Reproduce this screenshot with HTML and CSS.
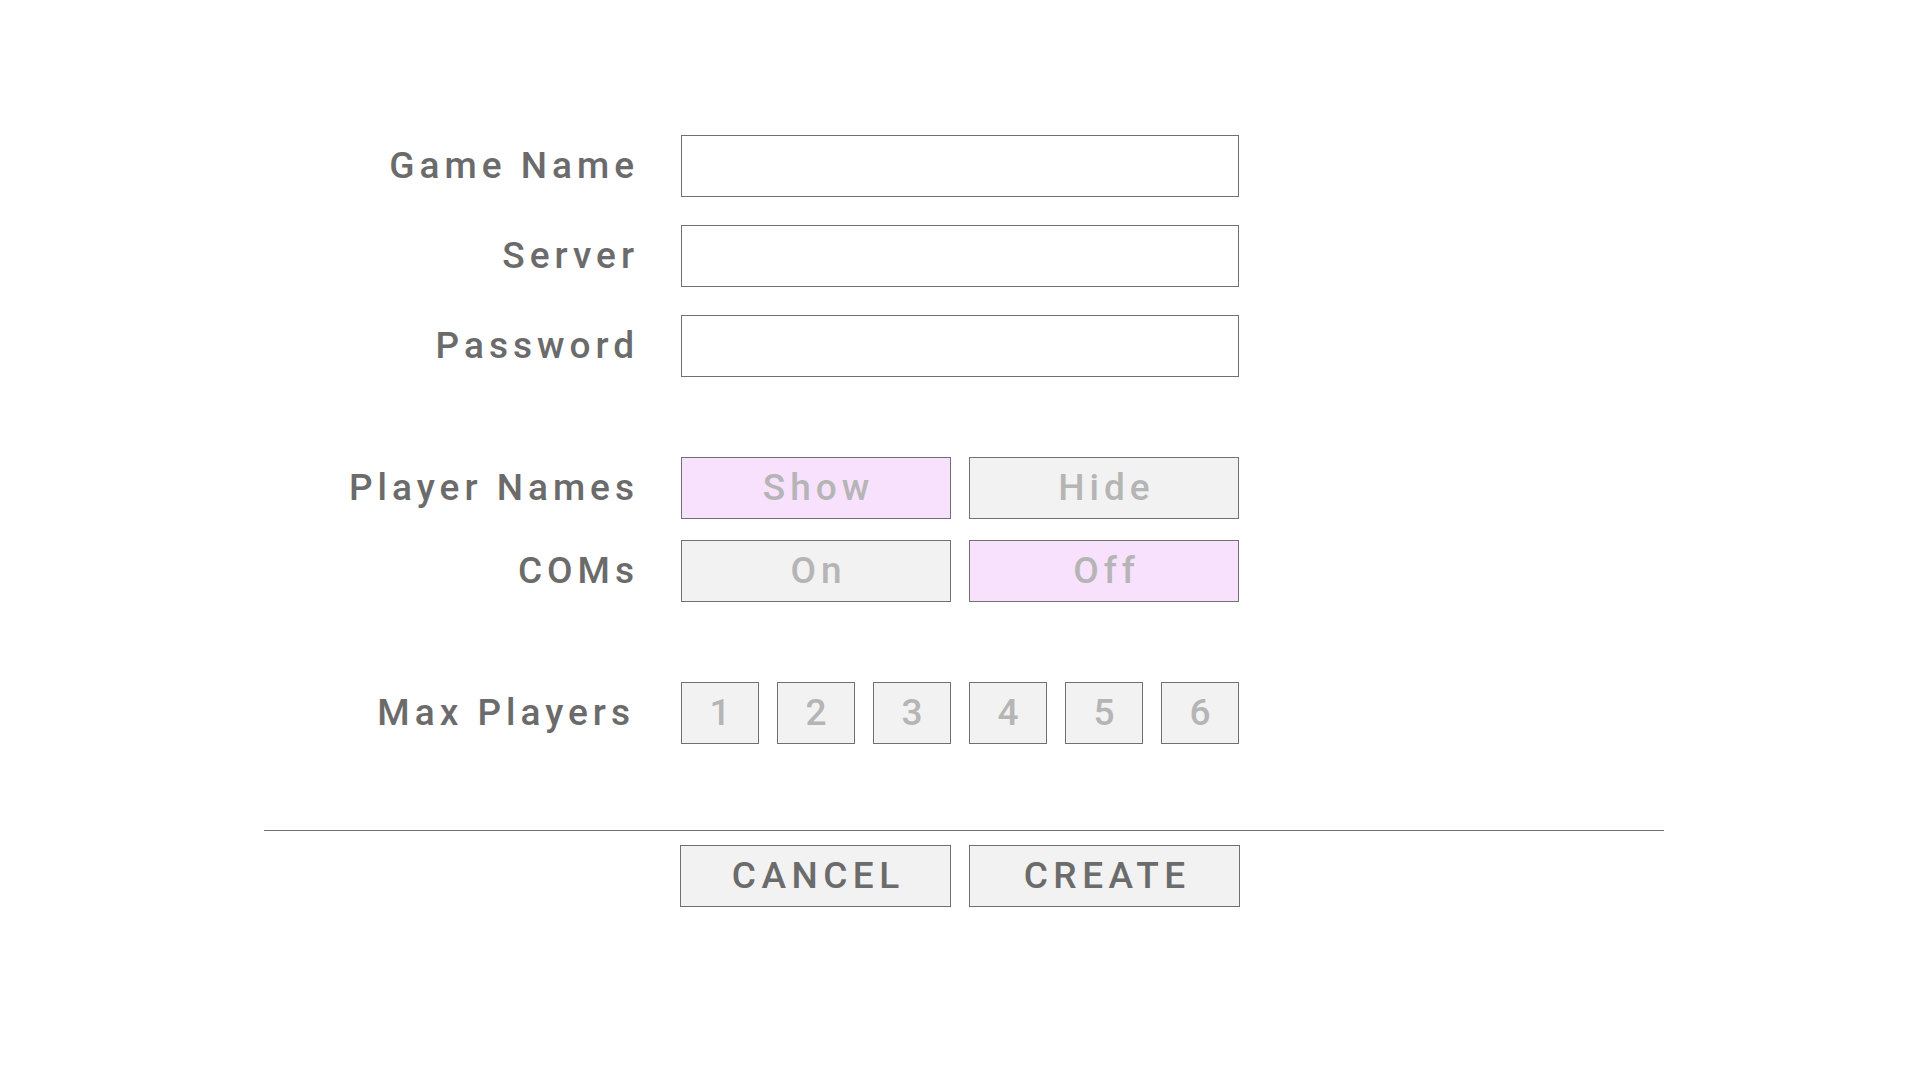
FILE: index.html
```html
<!DOCTYPE html>
<html>
<head>
<meta charset="utf-8">
<link rel="stylesheet" href="styles.css">
</head>
<body>
<main class="page">
  <section class="group group-text">
    <div class="row">
      <label class="label">Game Name</label>
      <div class="field"></div>
    </div>
    <div class="row">
      <label class="label">Server</label>
      <div class="field"></div>
    </div>
    <div class="row">
      <label class="label">Password</label>
      <div class="field"></div>
    </div>
  </section>

  <section class="group group-toggle">
    <div class="row">
      <label class="label">Player Names</label>
      <div class="pair">
        <div class="opt selected">Show</div>
        <div class="opt">Hide</div>
      </div>
    </div>
    <div class="row">
      <label class="label">COMs</label>
      <div class="pair">
        <div class="opt">On</div>
        <div class="opt selected">Off</div>
      </div>
    </div>
  </section>

  <section class="group group-max">
    <div class="row">
      <label class="label label-max">Max Players</label>
      <div class="nums">
        <div class="num">1</div>
        <div class="num">2</div>
        <div class="num">3</div>
        <div class="num">4</div>
        <div class="num">5</div>
        <div class="num">6</div>
      </div>
    </div>
  </section>

  <hr class="divider">

  <div class="actions">
    <div class="action">CANCEL</div>
    <div class="action">CREATE</div>
  </div>
</main>
</body>
</html>
```

FILE: styles.css
```css
* { box-sizing: border-box; }
html, body {
  margin: 0;
  padding: 0;
  background: #ffffff;
}
body {
  font-family: Roboto, "DejaVu Sans Condensed", sans-serif;
  font-weight: 500;
  color: #6b6b6b;
  width: 1920px;
  height: 1080px;
  overflow: hidden;
}
.page {
  padding-top: 135px;
  display: flex;
  flex-direction: column;
}
.group {
  display: flex;
  flex-direction: column;
}
.group-text { gap: 28px; }
.group-toggle { gap: 21px; margin-top: 80px; }
.group-max { margin-top: 80px; }
.row {
  display: grid;
  grid-template-columns: 634px 558px;
  column-gap: 47px;
  align-items: center;
  height: 62px;
}
.label {
  text-align: right;
  font-size: 37px;
  letter-spacing: 5px;
  margin-right: -5px;
  padding-bottom: 2px;
  color: #6b6b6b;
  line-height: 1;
}
.label-max { margin-right: -1px; }
.field {
  height: 62px;
  border: 1px solid #707070;
  background: #ffffff;
}
.pair {
  display: grid;
  grid-template-columns: 270px 270px;
  column-gap: 18px;
}
.opt, .num, .action {
  height: 62px;
  border: 1px solid #707070;
  background: #f2f2f2;
  display: flex;
  align-items: center;
  justify-content: center;
  font-size: 37px;
  letter-spacing: 5px;
  padding-left: 5px;
  padding-bottom: 2px;
  color: #b5b5b5;
}
.opt.selected { background: #f8e1fd; }
.nums {
  display: grid;
  grid-template-columns: repeat(6, 78px);
  column-gap: 18px;
}
.divider {
  margin: 86px 0 0 264px;
  width: 1400px;
  height: 0;
  border: 0;
  border-top: 1px solid #707070;
}
.actions {
  margin: 14px 0 0 680px;
  display: grid;
  grid-template-columns: 271px 271px;
  column-gap: 18px;
}
.action {
  height: 62px;
  color: #6b6b6b;
  letter-spacing: 5.5px;
  padding-left: 5.5px;
}
```
